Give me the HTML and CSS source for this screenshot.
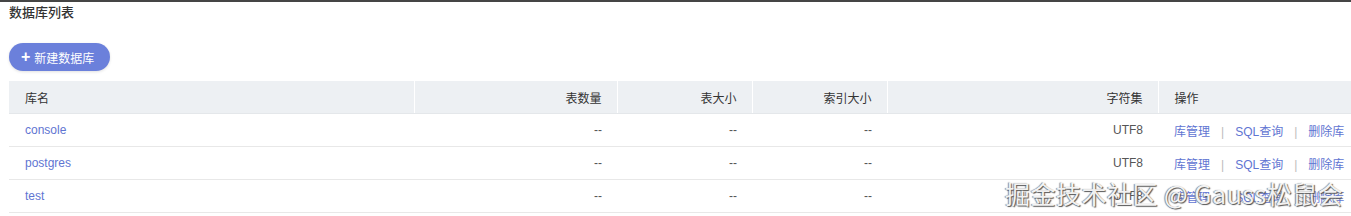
FILE: index.html
```html
<!DOCTYPE html>
<html lang="zh-CN">
<head>
  <meta charset="UTF-8" />
  <title>数据库列表</title>
  <link rel="stylesheet" href="styles.css">
</head>
<body>
  <div class="page">
    <h2 class="page-title">数据库列表</h2>
    <button type="button" class="add-btn"><span class="plus">+</span>新建数据库</button>
    <table class="db-table">
      <colgroup>
        <col class="c-name"><col class="c-count"><col class="c-size"><col class="c-index"><col class="c-charset"><col class="c-ops">
      </colgroup>
      <thead>
        <tr>
          <th>库名</th>
          <th class="num">表数量</th>
          <th class="num">表大小</th>
          <th class="num">索引大小</th>
          <th class="num">字符集</th>
          <th>操作</th>
        </tr>
      </thead>
      <tbody>
        <tr>
          <td><a href="#">console</a></td>
          <td class="num">--</td><td class="num">--</td><td class="num">--</td>
          <td class="num">UTF8</td>
          <td class="ops"><a href="#">库管理</a><span class="sep">|</span><a href="#">SQL查询</a><span class="sep">|</span><a href="#">删除库</a></td>
        </tr>
        <tr>
          <td><a href="#">postgres</a></td>
          <td class="num">--</td><td class="num">--</td><td class="num">--</td>
          <td class="num">UTF8</td>
          <td class="ops"><a href="#">库管理</a><span class="sep">|</span><a href="#">SQL查询</a><span class="sep">|</span><a href="#">删除库</a></td>
        </tr>
        <tr>
          <td><a href="#">test</a></td>
          <td class="num">--</td><td class="num">--</td><td class="num">--</td>
          <td class="num">UTF8</td>
          <td class="ops"><a href="#">库管理</a><span class="sep">|</span><a href="#">SQL查询</a><span class="sep">|</span><a href="#">删除库</a></td>
        </tr>
      </tbody>
    </table>
  </div>
  <div class="watermark">掘金技术社区 @ Gauss松鼠会</div>
</body>
</html>
```

FILE: styles.css
```css
body {
  margin: 0;
  font-family: "Liberation Sans", "Noto Sans CJK SC", sans-serif;
  font-size: 12px;
  color: #333;
  background: #fff;
  border-top: 2px solid #454545;
}
.page {
  padding: 0 0 0 9px;
}
.page-title {
  margin: 0;
  padding-top: 3px;
  height: 38px;
  font-size: 13px;
  font-weight: 500;
  line-height: 16px;
  color: #333;
}
.add-btn {
  display: flex;
  align-items: center;
  height: 28px;
  width: 101px;
  padding: 0 0 0 12px;
  border: none;
  border-radius: 14px;
  background: #6b80db;
  color: #fff;
  font-family: inherit;
  font-size: 12px;
  box-shadow: 0 1px 3px rgba(0,0,0,0.12);
  cursor: pointer;
}
.plus {
  font-size: 16px;
  font-weight: bold;
  margin-right: 4px;
  line-height: 16px;
}
.db-table {
  margin-top: 10px;
  width: 1342px;
  border-collapse: collapse;
  table-layout: fixed;
}
.c-name { width: 405px; }
.c-count { width: 203px; }
.c-size { width: 135px; }
.c-index { width: 135px; }
.c-charset { width: 271px; }
.c-ops { width: 193px; }
.db-table th {
  height: 32px;
  padding: 0 16px;
  background: #edf0f3;
  font-weight: normal;
  color: #333;
  text-align: left;
  border-left: 1px solid #fff;
  border-bottom: 1px solid #e4e7ea;
}
.db-table th:first-child {
  border-left: none;
}
.db-table td {
  height: 32px;
  padding: 0 16px;
  color: #555;
  border-bottom: 1px solid #e8e8e8;
  white-space: nowrap;
}
.db-table .num {
  text-align: right;
  padding-right: 15px;
}
.db-table a {
  color: #5f75d2;
  text-decoration: none;
}
.db-table td.ops {
  padding: 0 0 0 16px;
}
.ops .sep {
  color: #bbb;
  margin: 0 11px;
}
.watermark {
  position: absolute;
  left: 1005px;
  top: 178px;
  font-family: "Noto Sans CJK SC", sans-serif;
  font-size: 25px;
  line-height: 30px;
  letter-spacing: 0.5px;
  color: rgba(255,255,255,0.92);
  text-shadow: 1px 1px 1px #555, -1px 0 1px #888;
  white-space: nowrap;
}
```
